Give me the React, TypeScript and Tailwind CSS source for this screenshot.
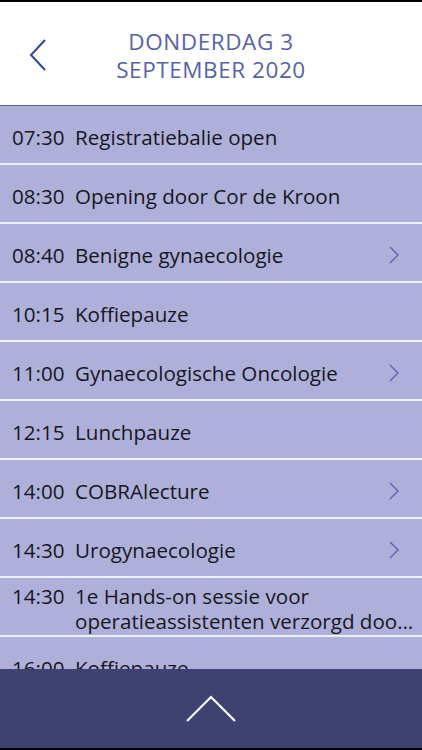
import React from 'react';

interface Session {
  time: string;
  title: string;
  hasDetail?: boolean;
}

const sessions: Session[] = [
  { time: '07:30', title: 'Registratiebalie open' },
  { time: '08:30', title: 'Opening door Cor de Kroon' },
  { time: '08:40', title: 'Benigne gynaecologie', hasDetail: true },
  { time: '10:15', title: 'Koffiepauze' },
  { time: '11:00', title: 'Gynaecologische Oncologie', hasDetail: true },
  { time: '12:15', title: 'Lunchpauze' },
  { time: '14:00', title: 'COBRAlecture', hasDetail: true },
  { time: '14:30', title: 'Urogynaecologie', hasDetail: true },
  {
    time: '14:30',
    title: '1e Hands-on sessie voor operatieassistenten verzorgd door Olympus',
  },
  { time: '16:00', title: 'Koffiepauze' },
];

const SessionRow = ({ time, title, hasDetail }: Session) => (
  <div className="flex items-center h-[59px] shrink-0 border-b-2 border-[#eef0fa] bg-[#aeb0da] pl-3 pr-[6px] pt-[5px] text-[20.6px] text-[#16161e]">
    <div className="flex flex-1 items-start leading-[25px] min-w-0">
      <span className="w-[63px] shrink-0">{time}</span>
      <span className="flex-1 line-clamp-2">{title}</span>
    </div>
    {hasDetail && (
      <svg width="12" height="18" viewBox="0 0 12 18" className="ml-2 mr-[16px] shrink-0">
        <path d="M2 1 L10 9 L2 17" fill="none" stroke="#5a64ad" strokeWidth="1.4" />
      </svg>
    )}
  </div>
);

const App = () => {
  return (
    <div
      className="flex flex-col h-[750px] w-[422px] overflow-hidden bg-white"
      style={{ fontFamily: '"Open Sans", "Noto Sans", sans-serif' }}
    >
      <div className="h-[2px] bg-black shrink-0" />
      <header className="relative flex items-center justify-center h-[104px] shrink-0 border-b border-[#5d6090]">
        <button className="absolute left-[28px] top-[36px]">
          <svg width="20" height="34" viewBox="0 0 20 34">
            <path d="M17 2 L3 17 L17 32" fill="none" stroke="#2f4a94" strokeWidth="2" />
          </svg>
        </button>
        <h1 className="text-center text-[22.5px] leading-[28px] text-[#5662ab] tracking-wide mt-[4px]">
          DONDERDAG 3
          <br />
          SEPTEMBER 2020
        </h1>
      </header>
      <div className="flex flex-col flex-1 overflow-hidden bg-[#aeb0da]">
        {sessions.map((s, i) => (
          <SessionRow key={i} {...s} />
        ))}
      </div>
      <footer className="flex items-center justify-center h-[79px] shrink-0 bg-[#3d4270]">
        <svg width="52" height="28" viewBox="0 0 52 28">
          <path d="M2 26 L26 2 L50 26" fill="none" stroke="white" strokeWidth="2.2" />
        </svg>
      </footer>
      <div className="h-[2px] bg-black shrink-0" />
    </div>
  );
};

export default App;
